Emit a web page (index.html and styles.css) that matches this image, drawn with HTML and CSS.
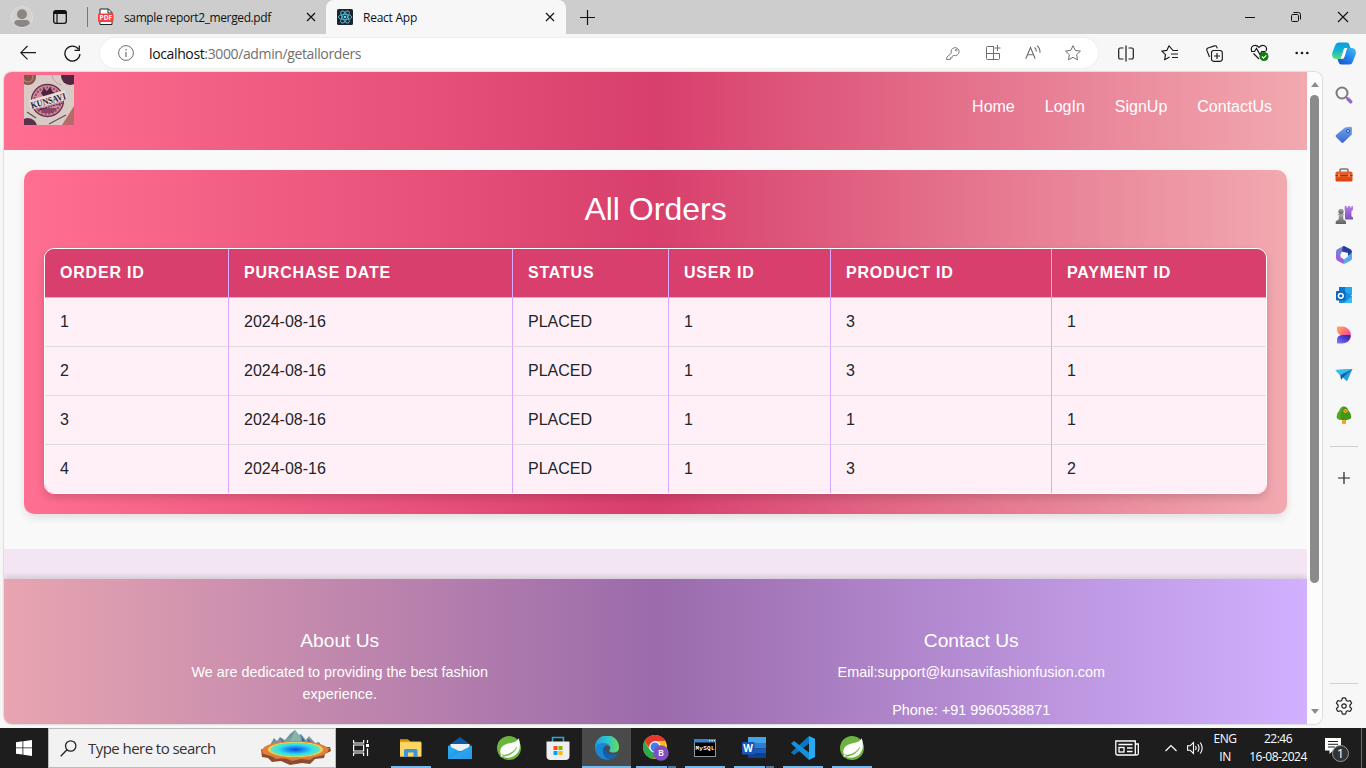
FILE: index.html
```html
<!DOCTYPE html>
<html lang="en">
<head>
<meta charset="utf-8">
<title>React App</title>
<link rel="stylesheet" href="styles.css">
</head>
<body>
<svg class="defs" width="0" height="0">
  <defs>
    <linearGradient id="gCopA" x1="0" y1="0" x2="0" y2="1"><stop offset="0" stop-color="#0a9ae0"/><stop offset=".5" stop-color="#14b5cf"/><stop offset="1" stop-color="#5fdc7c"/></linearGradient>
    <linearGradient id="gCopB" x1="1" y1="0" x2="0" y2="1"><stop offset="0" stop-color="#3fc4f5"/><stop offset=".5" stop-color="#2380ea"/><stop offset="1" stop-color="#1452c8"/></linearGradient>
    <linearGradient id="gTag" x1="0" y1="0" x2="0" y2="1"><stop offset="0" stop-color="#6fa2ee"/><stop offset="1" stop-color="#3c69cf"/></linearGradient>
    <linearGradient id="gBox" x1="0" y1="0" x2="0" y2="1"><stop offset="0" stop-color="#ee6427"/><stop offset="1" stop-color="#d8430f"/></linearGradient>
    <linearGradient id="gPawn" x1="0" y1="0" x2="0" y2="1"><stop offset="0" stop-color="#a9a9a9"/><stop offset="1" stop-color="#606060"/></linearGradient>
    <linearGradient id="gRook" x1="0" y1="0" x2="0" y2="1"><stop offset="0" stop-color="#b57be8"/><stop offset="1" stop-color="#7f4fc0"/></linearGradient>
    <linearGradient id="gDesA" x1="0" y1="0" x2="1" y2="1"><stop offset="0" stop-color="#ffb054"/><stop offset=".5" stop-color="#fb6580"/><stop offset="1" stop-color="#b93be6"/></linearGradient>
    <linearGradient id="gDesB" x1="0" y1="1" x2="1" y2="0"><stop offset="0" stop-color="#8b7bff"/><stop offset=".6" stop-color="#4a3ad0"/><stop offset="1" stop-color="#3a1e96"/></linearGradient>
    <linearGradient id="gEdge" x1="0" y1="0" x2="1" y2="0"><stop offset="0" stop-color="#1c9ce0"/><stop offset=".5" stop-color="#2fc3d0"/><stop offset="1" stop-color="#66dd5a"/></linearGradient>
    <linearGradient id="gEdgeB" x1="0" y1="0" x2="1" y2="1"><stop offset="0" stop-color="#1056a0"/><stop offset="1" stop-color="#1668b8"/></linearGradient>
    <linearGradient id="gMail" x1="0" y1="0" x2="1" y2="1"><stop offset="0" stop-color="#2fb4f3"/><stop offset="1" stop-color="#1483dc"/></linearGradient>
    <radialGradient id="gLake"><stop offset="0" stop-color="#1240e0"/><stop offset=".35" stop-color="#1e9bf5"/><stop offset=".62" stop-color="#2fe3e6"/><stop offset=".84" stop-color="#5fe0c0"/><stop offset=".94" stop-color="#f8d34a"/><stop offset="1" stop-color="#f2a03f"/></radialGradient>
    <linearGradient id="gRock" x1="0" y1="0" x2="1" y2="1"><stop offset="0" stop-color="#54738a"/><stop offset=".5" stop-color="#81a7a4"/><stop offset="1" stop-color="#4a6598"/></linearGradient>
    <symbol id="spring" viewBox="0 0 24 24">
      <circle cx="12" cy="12" r="12" fill="#6db33f"/>
      <path d="M21.600 2.200C20.500 4.600 18.500 6 15 6.700C8 8 3 10.500 3.300 16c.2 3.300 2.400 5.300 4.900 5.600C16 22.500 21.500 18 22.600 12c.6-3.200.2-6.800-1-9.800Z" fill="#fff"/>
      <path d="M5 19.300c7-.3 11.500-3 15-8.300-2.500 5.500-7.500 9.500-15 9.300Z" fill="#6db33f" stroke="#6db33f" stroke-width=".5"/>
      <circle cx="4.700" cy="19.800" r="1.300" fill="#fff" stroke="#6db33f" stroke-width=".6"/>
    </symbol>
  </defs>
</svg>

<header class="tabstrip">
  <div class="tab-tools">
    <svg class="avatar" width="22" height="22" viewBox="0 0 22 22"><circle cx="11" cy="11" r="10.500" fill="#d3d1ce" stroke="#dedcd9"/><circle cx="11" cy="8.200" r="5" fill="#898683"/><path d="M3.200 17.500Q3.200 14 7 14h8q3.800 0 3.800 3.500A10.500 10.500 0 0 1 3.200 17.500Z" fill="#898683"/></svg>
    <svg width="14" height="14" viewBox="0 0 14 14" fill="none" stroke="#111"><rect x=".7" y=".7" width="12.600" height="12.600" rx="2" stroke-width="1.300"/><path d="M1 2.500h12" stroke-width="3"/><path d="M4 4v9.500" stroke-width="1.200"/></svg>
    <i class="tab-rule"></i>
  </div>
  <div class="tab tab-pdf">
    <svg width="16" height="18" viewBox="0 0 16 18"><path d="M2 1h8.500L14 4.500V16.500H2Z" fill="#fff" stroke="#222"/><path d="M10 1v4h4" fill="none" stroke="#222"/><rect x="0" y="5.500" width="15.500" height="8.500" rx="1" fill="#f8403f"/><text x="7.800" y="12.300" text-anchor="middle" class="pdf-label">PDF</text></svg>
    <span class="tab-title">sample report2_merged.pdf</span>
    <svg class="x" width="10" height="10" viewBox="0 0 10 10" stroke="#111" stroke-width="1.200"><path d="M1 1l8 8M9 1l-8 8"/></svg>
  </div>
  <div class="tab tab-active">
    <svg width="16" height="16" viewBox="0 0 16 16"><rect width="16" height="16" rx="1.500" fill="#20232a"/><g fill="none" stroke="#4fb8d4" stroke-width=".9"><ellipse cx="8" cy="8" rx="6.700" ry="2.600"/><ellipse cx="8" cy="8" rx="6.700" ry="2.600" transform="rotate(60 8 8)"/><ellipse cx="8" cy="8" rx="6.700" ry="2.600" transform="rotate(120 8 8)"/></g><circle cx="8" cy="8" r="1.300" fill="#61dafb"/></svg>
    <span class="tab-title">React App</span>
    <svg class="x" width="10" height="10" viewBox="0 0 10 10" stroke="#111" stroke-width="1.200"><path d="M1 1l8 8M9 1l-8 8"/></svg>
  </div>
  <svg class="newtab" width="15" height="15" viewBox="0 0 15 15" stroke="#111" stroke-width="1.200"><path d="M7.500 0v15M0 7.500h15"/></svg>
  <div class="winctl">
    <svg width="10" height="12" viewBox="0 0 10 12" stroke="#111"><path d="M0 6.500h10"/></svg>
    <svg width="10" height="12" viewBox="0 0 10 12" fill="none" stroke="#111"><rect x=".5" y="3.500" width="7" height="7" rx="1.200"/><path d="M2.500 1.500h5q2 0 2 2v5"/></svg>
    <svg width="12" height="12" viewBox="0 0 12 12" stroke="#111" stroke-width="1.100"><path d="M1 1l10 10M11 1L1 11"/></svg>
  </div>
</header>

<nav class="toolbar">
  <svg class="back" width="16" height="16" viewBox="0 0 16 16" fill="none" stroke="#1a1a1a" stroke-width="1.200"><path d="M16 7.700H.8M7.500 1L.8 7.700l6.700 6.700"/></svg>
  <svg class="reload" width="17" height="17" viewBox="0 0 17 17" fill="none" stroke="#1a1a1a" stroke-width="1.300"><path d="M15.900 9A7.500 7.500 0 1 1 14.600 4.300"/><path d="M15.300 0.500v4.800h-4.800"/></svg>
  <div class="omnibox">
    <svg width="16" height="16" viewBox="0 0 16 16" fill="none" stroke="#6e6e6e"><circle cx="8" cy="8" r="7.400"/><path d="M8 7v5M8 4v1.400" stroke-width="1.200"/></svg>
    <span class="url"><b>localhost</b>:3000/admin/getallorders</span>
    <div class="omni-icons">
      <svg width="16" height="16" viewBox="0 0 16 16" fill="none" stroke="#7a7a7a"><path d="M6.400 8.200a4 4 0 1 1 2.300 2.200L7 11.500v1.300H5.300v1.700H1.700V12.300Z" stroke-linejoin="round"/><circle cx="11.200" cy="5.200" r=".8"/></svg>
      <svg width="16" height="16" viewBox="0 0 16 16" fill="none" stroke="#6e6e6e"><path d="M9 1.500H2.500q-1 0-1 1V13.500q0 1 1 1h11q1 0 1-1V8.500h-13M8.500 1.500v13M12.500 0v6M9.500 3h6"/></svg>
      <svg width="16" height="16" viewBox="0 0 16 16" fill="none" stroke="#6e6e6e" stroke-width="1.100"><path d="M.8 13.800L5.500 2.500l4.700 11.300M2.500 9.800h6M9.500 2.500q2 1.500 1.800 4M12 .7q3.300 2.500 3 7"/></svg>
      <svg width="16" height="16" viewBox="0 0 16 16" fill="none" stroke="#6e6e6e" stroke-linejoin="round"><path d="M8 .7l2.250 4.700 5.150.7-3.750 3.600.9 5.100L8 12.300l-4.550 2.500.9-5.100L.6 6.100l5.150-.7Z"/></svg>
    </div>
  </div>
  <div class="tool-icons">
    <svg width="16" height="17" viewBox="0 0 16 17" fill="none" stroke="#1a1a1a" stroke-width="1.200"><path d="M5.500 3H2.300Q.7 3 .7 4.600v7.800Q.7 14 2.300 14h3.200M10.500 3h3.200q1.600 0 1.600 1.600v7.800q0 1.600-1.600 1.600h-3.200M8 .5v16"/></svg>
    <svg width="18" height="16" viewBox="0 0 18 16" fill="none" stroke="#1a1a1a" stroke-width="1.150" stroke-linejoin="round"><path d="M17 5.500h-5L8 .8 5.800 5.400.8 6.100l3.700 3.600-.9 5.100 5-2.700M10 9h7M11 12.500h6"/></svg>
    <svg width="17" height="17" viewBox="0 0 17 17" fill="none" stroke="#1a1a1a" stroke-width="1.150"><rect x="5.500" y="5.500" width="10.800" height="10.800" rx="2.200"/><path d="M3.500 12L.9 5.400Q.3 3.700 2 3L8.500.9q1.600-.5 2.300 1l.5 1.500M11 8v6M8 11h6"/></svg>
    <svg width="20" height="19" viewBox="0 0 20 19" fill="none" stroke="#1a1a1a" stroke-width="1.200"><path d="M1.800 7Q.2 3.500 3.300 1.800 6.500.5 9 3.400q2.600-2.900 5.600-1.600Q17.600 3.500 16 7M3.500 9.500L9 15M1 7.500h3.500l2-3 3.500 6 1.700-3h3.800"/><circle cx="14" cy="12.500" r="4.500" fill="#107c10" stroke="none"/><path d="M11.900 12.500l1.600 1.600 2.800-2.800" stroke="#fff"/></svg>
    <svg width="14" height="4" viewBox="0 0 14 4" fill="#1a1a1a"><circle cx="1.700" cy="2" r="1.350"/><circle cx="7" cy="2" r="1.350"/><circle cx="12.300" cy="2" r="1.350"/></svg>
    <svg class="copilot" width="24" height="23" viewBox="0 0 24 23"><path d="M6.500.5h8.200q2 0 2.600 2L18.500 6H14q-1.800 0-2.400 2L8.800 17H4Q-.6 16.500.2 11L3.300 3Q4.200.5 6.500.5Z" fill="url(#gCopA)"/><path d="M17.500 22.500H9.300q-2 0-2.600-2L5.500 17H10q1.800 0 2.400-2L15.200 6H20q4.600.5 3.800 6l-3.100 8q-.9 2.500-3.200 2.500Z" fill="url(#gCopB)"/><path d="M12 7q.4-1 1.500-1H15l-3 9.300q-.5 1.200-1.600 1.200H9Z" fill="#fff"/></svg>
  </div>
</nav>

<div class="workspace">
  <main class="viewport">
    <div class="page">
      <div class="site-header">
        <svg class="logo" width="50" height="50" viewBox="0 0 50 50">
          <rect width="50" height="50" fill="#d8cbc5"/>
          <circle cx="4" cy="2" r="8" fill="#87554d"/><circle cx="4" cy="2" r="5" fill="none" stroke="#b07c6c" stroke-width="1.500"/>
          <path d="M28 0q1 8 10 10" fill="none" stroke="#c79ba8"/><circle cx="46" cy="1" r="9" fill="#552542"/>
          <circle cx="4" cy="52" r="9" fill="#5b3048"/><path d="M50 31v19H38Z" fill="#b8696a"/>
          <path d="M25 49l17-9" stroke="#66504e" stroke-width="1.200"/><path d="M3 37l9 6" stroke="#665a58" stroke-width="1.500"/>
          <circle cx="23.500" cy="25.500" r="16" fill="#cd8c9b" stroke="#6b3050" stroke-width="1.300"/>
          <circle cx="23.500" cy="25.500" r="13" fill="none" stroke="#8d4565" stroke-width="2" stroke-dasharray="2 1.500"/>
          <path d="M17 18l3-5 3 3 3-4 3 5 3 1-6 3h-7Z" fill="#4e2340"/><path d="M15 33h18l-4 5H19Z" fill="#8a4465"/>
          <g transform="rotate(-16 24 25)"><rect x="5" y="20" width="38" height="10" fill="#e6dcd9"/><text x="24" y="29" text-anchor="middle" textLength="36" lengthAdjust="spacingAndGlyphs" class="logo-text">KUNSAVI</text><path d="M11 32h26" stroke="#4e2340" stroke-dasharray="2 .7"/></g>
        </svg>
        <nav class="site-nav"><a>Home</a><a>LogIn</a><a>SignUp</a><a>ContactUs</a></nav>
      </div>
      <section class="orders">
        <h1>All Orders</h1>
        <div class="table-frame">
          <table>
            <colgroup><col class="c1"><col class="c2"><col class="c3"><col class="c4"><col class="c5"><col class="c6"></colgroup>
            <thead><tr><th>ORDER ID</th><th>PURCHASE DATE</th><th>STATUS</th><th>USER ID</th><th>PRODUCT ID</th><th>PAYMENT ID</th></tr></thead>
            <tbody>
              <tr><td>1</td><td>2024-08-16</td><td>PLACED</td><td>1</td><td>3</td><td>1</td></tr>
              <tr><td>2</td><td>2024-08-16</td><td>PLACED</td><td>1</td><td>3</td><td>1</td></tr>
              <tr><td>3</td><td>2024-08-16</td><td>PLACED</td><td>1</td><td>1</td><td>1</td></tr>
              <tr><td>4</td><td>2024-08-16</td><td>PLACED</td><td>1</td><td>3</td><td>2</td></tr>
            </tbody>
          </table>
        </div>
      </section>
      <div class="spacer-band"></div>
      <footer class="site-footer">
        <div class="foot-col"><h2>About Us</h2><p class="narrow">We are dedicated to providing the best fashion experience.</p></div>
        <div class="foot-col"><h2>Contact Us</h2><p>Email:support@kunsavifashionfusion.com</p><p>Phone: +91 9960538871</p></div>
      </footer>
    </div>
    <div class="scrollbar"><i class="up"></i><i class="thumb"></i><i class="down"></i></div>
  </main>
  <aside class="sidebar">
    <svg width="18" height="18" viewBox="0 0 18 18" fill="none"><circle cx="7" cy="7" r="5.500" stroke="#7b7b7b" stroke-width="2"/><path d="M11 11l2 2" stroke="#7b7b7b" stroke-width="1.600"/><path d="M13 13l2.700 2.700" stroke="#9a62d2" stroke-width="3.400" stroke-linecap="round"/></svg>
    <svg width="18" height="18" viewBox="0 0 18 18"><path d="M10 1.500L15.500.8q1.500 0 1.500 1.500L16.700 8.500 8.500 16.500q-1 .8-2 0L1 11q-.8-1 0-2Z" fill="url(#gTag)"/><circle cx="13" cy="5" r="1.500" fill="#dbe8ff" stroke="#28468f"/></svg>
    <svg width="18" height="18" viewBox="0 0 18 18"><path d="M5 6V4.200q0-1.200 1.200-1.200h5.600q1.200 0 1.200 1.200V6" fill="none" stroke="#777" stroke-width="1.600"/><rect x=".5" y="5.500" width="17" height="10" rx="1.500" fill="url(#gBox)"/><path d="M.5 9.500h17" stroke="#a62b07"/><path d="M4 8.500v2M14 8.500v2" stroke="#eee" stroke-width="1.200"/></svg>
    <svg width="18" height="18" viewBox="0 0 18 18"><path d="M9.700 0h1.900v1.500h1.500V0h2v1.500h1.400V0h1.400v4l-1.500 1.300v5l1.600 1.200V13.500H10V5.300L9.700 4Z" fill="url(#gRook)"/><circle cx="6" cy="5.500" r="2.700" fill="url(#gPawn)"/><path d="M2.800 8h6.400v1.300H8l.5 4.200 2.500 1.700V18H.7v-2.800l2.800-1.700.5-4.200H2.800Z" fill="url(#gPawn)"/></svg>
    <svg width="18" height="18" viewBox="0 0 18 18"><path d="M1 9V5.800Q1 4 2.500 3.200L8 .3l4 2.200L7 5.700 5.500 8v4l-2 1.500Q1 12.800 1 9Z" fill="#777dd9"/><path d="M8 .3q1-.5 2.200.1L15.500 3.300Q17 4.200 17 6v5l-4-1.500V7L7 5.500Z" fill="#263d9d"/><path d="M17 6v6.200q0 1.700-1.500 2.500L10 17.500q-1 .5-2 0L3 14.500l3-1.500 3 .4 4-2.800Z" fill="#55a9ee"/><path d="M1 8.500L5.500 11 9 13.500 8.500 17.700 2.500 14.700Q1 13.800 1 12Z" fill="#a061d8"/></svg>
    <svg width="18" height="18" viewBox="0 0 18 18"><rect x="4" y="1" width="13" height="8" fill="#28a8ea"/><path d="M4 1h6v8H4Z" fill="#0a79cf"/><path d="M11 6l6 4v7H4v-4Z" fill="#1490df"/><path d="M17 10v7H9Z" fill="#35bdf2"/><rect x="1" y="5" width="9.500" height="9.500" rx="1" fill="#0868bd"/><circle cx="5.800" cy="9.800" r="2.400" fill="none" stroke="#fff" stroke-width="1.500"/></svg>
    <svg width="18" height="18" viewBox="0 0 18 18"><path d="M2 .5h4.500A9 9 0 0 1 16 9q0 4.500-5 7 3-5-1-6.300Q2 9.500 2 4Z" fill="url(#gDesA)"/><path d="M2 17.500V14q0-5 6-5h7q1.500 3-2 6.500-2.500 2-6 2Z" fill="url(#gDesB)"/></svg>
    <svg width="18" height="18" viewBox="0 0 18 18"><path d="M.5 4L17.500 3 12 15.300 5.300 9.500Z" fill="#259edc"/><path d="M5.300 9.500L17.500 3 8 11.300 6 14Z" fill="#0b5fa3"/><path d="M.5 4l17-1L4.800 8.800Z" fill="#3cbcee"/></svg>
    <svg width="18" height="18" viewBox="0 0 18 18"><rect x="7" y="12" width="4" height="6" rx="1" fill="#eda321"/><path d="M9 .5q3 0 4.500 4 3.500 4.500 2.500 7.500Q15 14 9 14t-7-2Q1 9 4.500 4.500 6 .5 9 .5Z" fill="#42971b"/><path d="M9 .5q-3 0-4.500 4Q1 9 2 12q1 1.500 4 1.700Q4 8 9 .5Z" fill="#4fa826"/><path d="M10.500 3v4M8.500 5h4" stroke="#ffb525" stroke-width="2"/><circle cx="10.500" cy="5" r="1" fill="#dc6216"/></svg>
    <i class="side-rule"></i>
    <svg width="18" height="18" viewBox="0 0 18 18" stroke="#222" stroke-width="1.200"><path d="M9 3v12M3 9h12"/></svg>
    <i class="side-rule bottom"></i>
    <svg width="18" height="18" viewBox="0 0 18 18" fill="none" stroke="#222" stroke-width="1.200" stroke-linejoin="round"><path d="M7.300 1.200q1.700-.5 3.400 0L11.300 3.500 12.600 4.200 14.900 3.500Q16.100 4.700 16.600 6.400L14.900 8V10L16.600 11.600Q16.100 13.300 14.900 14.500L12.600 13.800 11.300 14.500 10.700 16.800q-1.700.5-3.400 0L6.700 14.500 5.400 13.800 3.100 14.500Q1.900 13.300 1.400 11.600L3.100 10V8L1.400 6.400Q1.900 4.700 3.100 3.500L5.400 4.200 6.700 3.500Z"/><circle cx="9" cy="9" r="2.200"/></svg>
  </aside>
</div>

<footer class="taskbar">
  <div class="start"><svg width="16" height="16" viewBox="0 0 16 16" fill="#fff"><path d="M0 2.200l6.500-.9v6.200H0ZM7.300 1.200L16 0v7.500H7.300ZM0 8.300h6.500v6.300L0 13.700ZM7.300 8.300H16V16l-8.700-1.200Z"/></svg></div>
  <div class="search">
    <svg width="17" height="17" viewBox="0 0 17 17" fill="none" stroke="#222" stroke-width="1.300"><circle cx="10.700" cy="6" r="5.200"/><path d="M7 9.700L.7 16.200"/></svg>
    <span>Type here to search</span>
    <svg class="lake" width="72" height="36" viewBox="0 0 72 36"><path d="M10 15l4-7 3 3 3-4 5 3 5-6 5-4 4 5 2-1 5 6 3-4 6 7 4-1 5 8Z" fill="url(#gRock)"/><path d="M35 0l-5 12 5-2 3 4 3-5Z" fill="#87b5a7"/><path d="M20 8l4 8h4ZM47 8l3 8h5ZM41 5l2 11h5Z" fill="#4058ad"/><path d="M1 19l1 8 6 1 4 4 9-1 9 4 12-2 8 1 5-5 9-1 1-4 6-3-1-4Z" fill="#8b4b30"/><path d="M1 19l2 5 8 2 5 3 9-1 7 3 9-2 9 1 5-4 9-1 3-4 3-3Z" fill="#d9773a"/><ellipse cx="35.500" cy="20" rx="33" ry="9" fill="#e07f3b"/><ellipse cx="35.500" cy="19.500" rx="28" ry="7.800" fill="url(#gLake)"/></svg>
  </div>
  <div class="apps">
    <div class="app plain"><svg width="17" height="16" viewBox="0 0 17 16" fill="none" stroke="#fff" stroke-width="1.200"><path d="M.6 0v3h10V0M.6 16v-3h10v3M.6 5h10v6H.6ZM14.500 0v3M14.500 8.500V16"/><rect x="13" y="4" width="3" height="3" fill="#fff" stroke="none"/></svg></div>
    <div class="app open"><svg width="24" height="24" viewBox="0 0 24 24"><path d="M1 3.500h8l2 2H22v15H1Z" fill="#f6bd32"/><path d="M1 3.500h8l1 2H1Z" fill="#d18a10"/><rect x="1" y="6.500" width="21.500" height="14" fill="#fdd765"/><path d="M5 21v-6.500q0-1.500 1.500-1.500H17q1.500 0 1.500 1.500V21h-4v-4.500H9V21Z" fill="#3f94d8"/></svg></div>
    <div class="app"><svg width="24" height="24" viewBox="0 0 24 24"><path d="M0 10L12 1l12 9v3H0Z" fill="#0b5ba8"/><path d="M2.500 8h19v7h-19Z" fill="#eef2f5"/><path d="M0 9.500L12 15.500l12-6V23H0Z" fill="url(#gMail)"/><path d="M0 23L24 9.500V23Z" fill="#36aaf0" opacity=".6"/></svg></div>
    <div class="app"><svg width="24" height="24"><use href="#spring"/></svg></div>
    <div class="app"><svg width="24" height="24" viewBox="0 0 24 24"><path d="M6.500 7V1.500h11V7" fill="none" stroke="#2bacd8" stroke-width="1.500"/><path d="M.5 5.500h23V20q0 4-4 4h-15q-4 0-4-4Z" fill="#eee"/><path fill="#f25022" d="M7.500 10H11.500v4H7.500Z"/><path fill="#7fba00" d="M12.500 10h4v4h-4Z"/><path fill="#00a4ef" d="M7.500 15h4v4h-4Z"/><path fill="#ffb900" d="M12.500 15h4v4h-4Z"/></svg></div>
    <div class="app open active"><svg width="24" height="24" viewBox="0 0 24 24"><path d="M0 11A12 12 0 0 1 24 11.500q0 5-5.500 5-4.500 0-4.200-2 1.200-1.300 1-3Q14.500 8 10 8 4 8 0 12.500Z" fill="url(#gEdge)"/><path d="M0 12.500Q2 7 8.500 7q5.500 0 6.500 4-2-2-4.500-1.200Q8 11 8 14q0 6 8 9A12 12 0 0 1 0 12.500Z" fill="#1b86d4"/><path d="M8 14.500Q8 11 11 9.500q-1.500 5 2.500 8 4.500 2.500 9.500-.5-3 5.500-8 6.500Q8 22 8 14.500Z" fill="url(#gEdgeB)"/></svg></div>
    <div class="app open multi"><svg width="26" height="26" viewBox="0 0 26 26"><circle cx="12" cy="12" r="12" fill="#fbc116"/><path d="M1.600 6A12 12 0 0 0 11 24l5-9Q8 18 5 12Z" fill="#2da94f"/><path d="M1.600 6A12 12 0 0 1 22.400 6H12Q7 7 6.500 13Z" fill="#e5392f"/><circle cx="12" cy="12" r="5.800" fill="#fff"/><circle cx="12" cy="12" r="4.500" fill="#3e7fe9"/><circle cx="18" cy="18" r="7.700" fill="#8150be"/><text x="18" y="21.400" text-anchor="middle" class="badge-b">B</text></svg></div>
    <div class="app open"><svg width="24" height="24" viewBox="0 0 24 24"><rect x="1.500" y="3.500" width="21" height="17" fill="#000" stroke="#8a99aa"/><path d="M1 3h22v3.500H1Z" fill="#3b83cd"/><path d="M16 4.700h1.300M18.500 4.700h1.300M21 4.700h1" stroke="#fff"/><text x="2.500" y="13.500" class="mysql" textLength="19">MySQL</text></svg></div>
    <div class="app open multi"><svg width="24" height="24" viewBox="0 0 24 24"><path fill="#41a5ee" d="M6 1h18v6H6Z"/><path fill="#2b7cd3" d="M6 7h18v5.500H6Z"/><path fill="#185abd" d="M6 12.500h18V17H6Z"/><path fill="#103f91" d="M6 17h18v5H6Z"/><rect y="6" width="12.500" height="12.500" rx="1" fill="#1b56b5"/><text x="6.200" y="15.800" text-anchor="middle" class="word">W</text></svg></div>
    <div class="app open"><svg width="24" height="24" viewBox="0 0 24 24"><path d="M18 0l6 2.800V21l-6 3Z" fill="#29a9f2"/><path d="M18 0v7.500L3 19 0 16.500Z" fill="#0b76bf"/><path d="M18 24v-7.500L3 5 0 7.500Z" fill="#1391dc"/></svg></div>
    <div class="app open"><svg width="24" height="24"><use href="#spring"/></svg></div>
  </div>
  <div class="tray">
    <svg class="news" width="24" height="16" viewBox="0 0 24 16" fill="none" stroke="#fff" stroke-width="1.300"><path d="M20.500 15H2.500Q.8 15 .8 13.300V1h19.500v12.500q0 1.500 1.500 1.500t1.500-1.500V4h-3M3.500 4.500h14M12 8h5.500M12 11.500h5.500"/><rect x="4" y="7.500" width="5" height="4.500"/></svg>
    <svg class="chev" width="12" height="8" viewBox="0 0 12 8" fill="none" stroke="#fff" stroke-width="1.200"><path d="M.5 7L6 1.500 11.500 7"/></svg>
    <svg class="vol" width="17" height="14" viewBox="0 0 17 14" fill="none" stroke="#fff" stroke-width="1.100"><path d="M.6 4.800h2.500L6.500 1.500v11L3.100 9.200H.6ZM8.500 5q1.200 2 0 4M10.800 3.300q2.500 3.700 0 7.400M13.200 1.500q4 5.500 0 11"/></svg>
    <div class="lang"><span>ENG</span><span>IN</span></div>
    <div class="clock"><span>22:46</span><span>16-08-2024</span></div>
    <svg class="notif" width="26" height="26" viewBox="0 0 26 26"><path d="M0 1h16v12.500H8L4.500 17v-3.500H0Z" fill="#fff"/><path d="M3 4.500h10M3 7.300h10M3 10h7" stroke="#222"/><circle cx="15.500" cy="16.500" r="8" fill="#333" stroke="#999"/><text x="15.500" y="21" text-anchor="middle" class="notif-n">1</text></svg>
    <i class="peek"></i>
  </div>
</footer>
</body>
</html>
```

FILE: styles.css
```css
* { box-sizing: border-box; }
html, body { margin: 0; height: 768px; overflow: hidden; }
body { width: 1366px; display: flex; flex-direction: column; background: #f7f7f7; font-family: "Liberation Sans", Arial, sans-serif; }
svg { display: block; flex: none; }
.defs { position: absolute; }

/* Tab strip */
.tabstrip { height: 34px; flex: none; display: flex; align-items: center; background: #cdcdcd; font-family: "Open Sans", sans-serif; }
.tab-tools { display: flex; align-items: center; width: 88px; padding-left: 11px; gap: 20px; }
.tab-rule { width: 1px; height: 20px; background: #777; }
.tab { display: flex; align-items: center; height: 34px; }
.tab-title { font-size: 12px; letter-spacing: -0.38px; color: #111; white-space: nowrap; }
.tab-pdf { width: 238px; padding: 0 10px; gap: 10px; }
.tab-active { width: 240px; padding: 0 11px; gap: 10px; background: #f7f7f7; border-radius: 8px 8px 0 0; }
.tab-active .tab-title { letter-spacing: -0.25px; }
.x { margin-left: auto; }
.newtab { margin-left: 14px; }
.winctl { margin-left: auto; display: flex; align-items: center; gap: 36px; padding-right: 17px; }
.pdf-label { font: bold 6.5px "Open Sans", sans-serif; fill: #fff; }

/* Address bar */
.toolbar { height: 38px; flex: none; display: flex; align-items: center; background: #f7f7f7; }
.back { margin-left: 20px; }
.reload { margin-left: 27.500px; }
.omnibox { width: 998px; height: 30px; margin-left: 19.500px; padding: 0 17px 0 18px; display: flex; align-items: center; background: #fff; border-radius: 15px; box-shadow: 0 0 3px rgba(0,0,0,.08); }
.url { margin-left: 15px; font: 14px "Open Sans", sans-serif; letter-spacing: -0.37px; color: #707070; }
.url b { font-weight: 400; color: #111; }
.omni-icons { margin-left: auto; display: flex; gap: 24px; }
.tool-icons { margin-left: 20px; display: flex; align-items: center; gap: 27px; }
.tool-icons svg:nth-child(5) { margin-left: -2px; }
.tool-icons .copilot { margin-left: -4px; }

/* Workspace */
.workspace { height: 656px; flex: none; display: flex; padding-left: 4px; }
.viewport { width: 1318px; height: 652px; display: flex; background: #f9f9f9; border-radius: 8px; overflow: hidden; box-shadow: 0 0 2px rgba(0,0,0,.35); }
.page { width: 1303px; overflow: hidden; }
.scrollbar { width: 15px; display: flex; flex-direction: column; align-items: center; background: #fcfcfc; padding: 10px 0 10px; }
.scrollbar .up { border: 4.500px solid transparent; border-top: 0; border-bottom: 5px solid #8b8b8b; }
.scrollbar .thumb { width: 9px; height: 488px; margin-top: 8px; background: #8b8b8b; border-radius: 5px; }
.scrollbar .down { margin-top: auto; border: 4.500px solid transparent; border-bottom: 0; border-top: 5px solid #8b8b8b; }

.site-header { height: 78px; padding: 3px 35px 0 20px; display: flex; justify-content: space-between; background: linear-gradient(to right, #ff6f91, #d83f6c, #f2a9b0); }
.site-nav { display: flex; gap: 30px; padding-top: 22px; font-size: 16px; line-height: 20px; color: #fff; }
.logo-text { font: bold 9.500px "Liberation Serif", serif; fill: #2c1b33; }
.orders { margin: 20px 20px 35px; height: 344px; padding: 20px; border-radius: 10px; background: linear-gradient(to right, #ff6f91, #d83f6c, #f2a9b0); box-shadow: 0 4px 8px rgba(0,0,0,.1); }
.orders h1 { margin: 0 0 20px; font-size: 32px; line-height: 38px; font-weight: 400; text-align: center; color: #fff; }
.table-frame { border: 1px solid #fff; border-radius: 10px; overflow: hidden; box-shadow: 0 4px 8px rgba(0,0,0,.15); }
table { width: 1221px; table-layout: fixed; border-collapse: separate; border-spacing: 0; }
.c1 { width: 184px; } .c2 { width: 284px; } .c3 { width: 156px; } .c4 { width: 162px; } .c5 { width: 221px; } .c6 { width: 214px; }
th, td { height: 49px; padding: 0 15px; text-align: left; font-size: 16px; line-height: 20px; border-right: 1px solid #d9a8ff; border-bottom: 1px solid #ddd; }
th { background: #d83f6c; color: #fff; letter-spacing: .8px; border-bottom-color: #e6a3e6; }
td { background: #fff0f8; color: #212529; }
th:last-child, td:last-child { border-right: 0; }
tbody tr:last-child td { height: 48px; border-bottom: 0; }
.spacer-band { height: 30px; background: #f3e5f3; }
.site-footer { height: 200px; padding: 50px 20px; display: flex; background: linear-gradient(to right, #e8a5b0, #9b6bab, #d1b0ff); box-shadow: 0 -2px 6px rgba(0,0,0,.15); color: #fff; text-align: center; }
.foot-col { flex: 1; }
.foot-col h2 { margin: 0 0 9px; font-size: 19.200px; line-height: 23px; font-weight: 400; }
.foot-col p { margin: 0 0 16px; font-size: 14.400px; line-height: 22px; }
.foot-col .narrow { width: 300px; margin: 0 auto; }

/* Browser sidebar */
.sidebar { width: 44px; height: 656px; display: flex; flex-direction: column; align-items: center; gap: 22px; padding-top: 14px; padding-bottom: 13px; }
.side-rule { width: 28px; height: 1px; flex: none; background: #cfcfcf; }
.side-rule.bottom { margin-top: auto; margin-bottom: -9px; }

/* Taskbar */
.taskbar { height: 40px; flex: none; display: flex; background: #1d1d1d; font-family: "Open Sans", sans-serif; color: #fff; }
.start { width: 48px; display: flex; align-items: center; justify-content: center; }
.search { width: 288px; display: flex; align-items: center; padding-left: 11px; background: #f2f2f2; border: 1px solid #bcbcbc; color: #333; font-size: 15px; }
.search span { margin-left: 11px; letter-spacing: -0.55px; white-space: nowrap; }
.lake { margin-left: auto; margin-right: 3px; }
.apps { display: flex; }
.app { width: 49px; height: 40px; display: flex; align-items: center; justify-content: center; }
.app.plain { width: 50px; padding-right: 1px; }
.app.open { background: linear-gradient(#76b9ed, #76b9ed) 5px bottom / 40px 2px no-repeat; }
.app.active { background: linear-gradient(#76b9ed, #76b9ed) bottom / 100% 2px no-repeat #4a4a4a; }
.app.multi { background: linear-gradient(to right, #76b9ed 31px, #1d1d1d 31px, #1d1d1d 32px, #507b9c 32px) 5px bottom / 40px 2px no-repeat; }
.badge-b { font: 600 9px "Open Sans", sans-serif; fill: #fff; }
.mysql { font: bold 6px "Liberation Mono", monospace; fill: #fff; }
.word { font: bold 10px "Open Sans", sans-serif; fill: #fff; }
.app svg { margin-left: 1px; }
.tray { margin-left: auto; display: flex; align-items: center; font-size: 12px; }
.chev { margin-left: 26px; }
.vol { margin-left: 10px; }
.lang, .clock { display: flex; flex-direction: column; align-items: center; line-height: 18px; letter-spacing: -0.5px; }
.lang { width: 24px; margin-left: 9px; }
.clock { width: 60px; margin-left: 11px; }
.notif { margin-left: 17px; margin-top: 4px; }
.notif-n { font: 13px "Open Sans", sans-serif; fill: #fff; }
.peek { width: 1px; height: 40px; margin-left: 10px; margin-right: 4px; background: #6a6a6a; }
```
